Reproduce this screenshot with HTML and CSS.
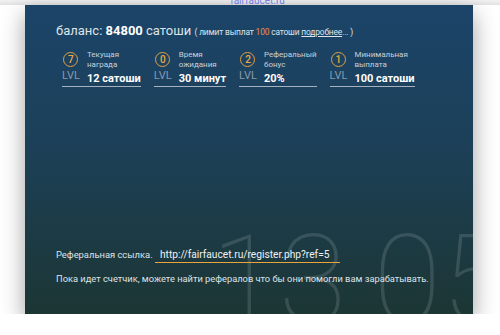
FILE: index.html
```html
<!DOCTYPE html>
<html>
<head>
  <title>Faucet</title>
  <link rel="stylesheet" href="styles.css">
</head>
<body>

  <div id="topbar"><a href="#">fairfaucet.ru</a></div>

  <div id="panel">
    <div id="clock">13.05</div>

    <p class="balance">баланс: <b>84800</b> сатоши <span class="limit">( лимит выплат <span class="orange">100</span> сатоши <a href="#">подробнее</a>... )</span></p>

    <div id="stats">
      <div class="stat">
        <div class="lvl">
          <span class="circle">7</span>
          <span class="lvl-text">LVL</span>
        </div>
        <div class="info">
          <span class="label">Текущая<br>награда</span>
          <span class="value">12 сатоши</span>
        </div>
      </div>
      <div class="stat">
        <div class="lvl">
          <span class="circle">0</span>
          <span class="lvl-text">LVL</span>
        </div>
        <div class="info">
          <span class="label">Время<br>ожидания</span>
          <span class="value">30 минут</span>
        </div>
      </div>
      <div class="stat">
        <div class="lvl">
          <span class="circle">2</span>
          <span class="lvl-text">LVL</span>
        </div>
        <div class="info">
          <span class="label">Реферальный<br>бонус</span>
          <span class="value">20%</span>
        </div>
      </div>
      <div class="stat">
        <div class="lvl">
          <span class="circle">1</span>
          <span class="lvl-text">LVL</span>
        </div>
        <div class="info">
          <span class="label">Минимальная<br>выплата</span>
          <span class="value">100 сатоши</span>
        </div>
      </div>
    </div>

    <div id="referral">
      <p class="ref-line">Реферальная ссылка. <span class="ref-link">http://fairfaucet.ru/register.php?ref=5</span></p>
      <p class="ref-note">Пока идет счетчик, можете найти рефералов что бы они помогли вам зарабатывать.</p>
    </div>
  </div>

</body>
</html>
```

FILE: styles.css
```css
*{
  padding: 0;
  margin: 0;
  box-sizing: border-box;
}

body{
  background-color: #fff;
  font-family: Roboto, "Noto Sans", sans-serif;
  color: #dde3e8;
  overflow: hidden;
}

#topbar{
  height: 5px;
  overflow: hidden;
  background: linear-gradient(#f2f2f2, #e2e2e2);
  text-align: center;
  font-size: 10px;
  line-height: 1px;
}
#topbar a{
  color: #7b86f2;
  margin-left: 15px;
}

#panel{
  position: relative;
  width: 448px;
  height: 309px;
  margin-left: 25px;
  padding: 18px 0 30px 31px;
  background: linear-gradient(#1b4469, #1c4058 45%, #1c3634);
  box-shadow: 0 9px 22px rgba(0,0,0,0.38);
  overflow: hidden;
  display: flex;
  flex-direction: column;
}

#clock{
  position: absolute;
  left: 186px;
  top: 214px;
  font-size: 124px;
  font-weight: 100;
  line-height: 1;
  color: rgba(255,255,255,0.13);
  white-space: nowrap;
}

.balance{
  position: relative;
  font-size: 13px;
}
.balance b{
  color: #fff;
}
.limit{
  font-size: 8.4px;
  letter-spacing: -0.15px;
}
.orange{
  color: #ef8f3c;
}
.balance a{
  color: #dde3e8;
}

#stats{
  position: relative;
  display: flex;
  gap: 13px;
  margin-top: 12px;
  margin-left: 6px;
}
.stat{
  display: flex;
  gap: 7px;
  padding-bottom: 1px;
  border-bottom: 1px solid #a5b1bd;
}
.lvl{
  display: flex;
  flex-direction: column;
  align-items: center;
}
.circle{
  width: 15px;
  height: 15px;
  border: 1px solid #e5a03f;
  border-radius: 50%;
  color: #f0a840;
  font-size: 10px;
  font-weight: 500;
  text-align: center;
  line-height: 13px;
  margin-top: 2px;
}
.lvl-text{
  font-size: 11px;
  color: #8799ad;
  margin-top: 2px;
}
.info{
  display: flex;
  flex-direction: column;
}
.label{
  font-size: 8px;
  line-height: 10px;
  color: #c6d0da;
}
.value{
  font-size: 11px;
  font-weight: 700;
  color: #fff;
  margin-top: 2px;
}

#referral{
  position: relative;
  margin-top: auto;
}
.ref-line{
  font-size: 9.4px;
}
.ref-link{
  display: inline-block;
  font-size: 10.2px;
  padding: 0 11px 2px 5px;
  border-bottom: 1px solid #e9a43b;
  color: #eef2f5;
}
.ref-note{
  font-size: 9.3px;
  margin-top: 10px;
}
```
